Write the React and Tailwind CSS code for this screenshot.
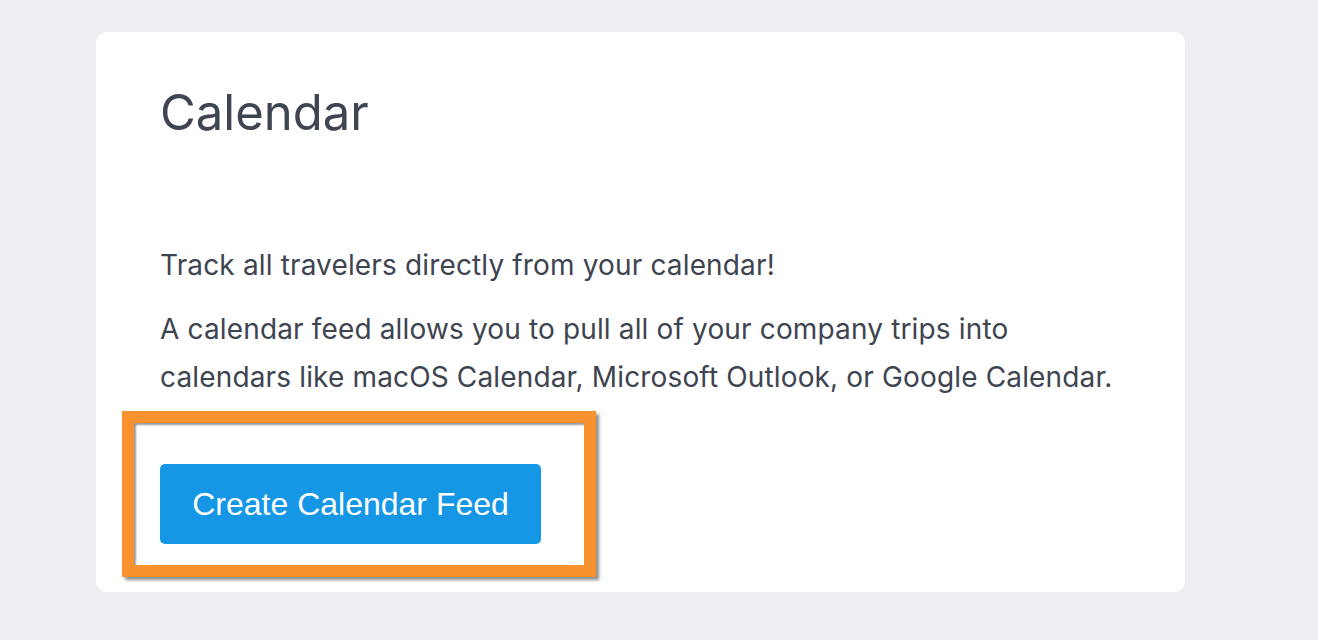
export default function App() {
  return (
    <div className="min-h-[640px] w-full bg-[#edeef3] pt-8 pl-24" style={{ fontFamily: 'Inter, "Noto Sans", sans-serif' }}>
      <div className="relative h-[560px] w-[1089px] rounded-[10px] bg-white pl-[64px] pt-[53px]">
        <h1 className="text-[49px] leading-[56px] font-normal text-[#3f4551]">Calendar</h1>

        <div className="mt-[100px] text-[28px] tracking-[0.15px] text-[#3e4450]">
          <p className="leading-[48px]">Track all travelers directly from your calendar!</p>
          <p className="mt-4 leading-[48px]">
            A calendar feed allows you to pull all of your company trips into
            <br />
            calendars like macOS Calendar, Microsoft Outlook, or Google Calendar.
          </p>
        </div>

        <button
          className="mt-[63px] h-20 w-[381px] rounded-[5px] bg-[#1597e5] text-[32px] text-white"
          style={{ fontFamily: '"Liberation Sans", Arial, sans-serif' }}
        >
          Create Calendar Feed
        </button>

        {/* annotation box */}
        <div className="pointer-events-none absolute left-[26px] top-[379px] h-[166px] w-[474px] border-[12px] border-[#f7922f] shadow-[3px_3px_3px_rgba(0,0,0,0.45),inset_2px_2px_2px_rgba(0,0,0,0.4)]" />
      </div>
    </div>
  );
}
